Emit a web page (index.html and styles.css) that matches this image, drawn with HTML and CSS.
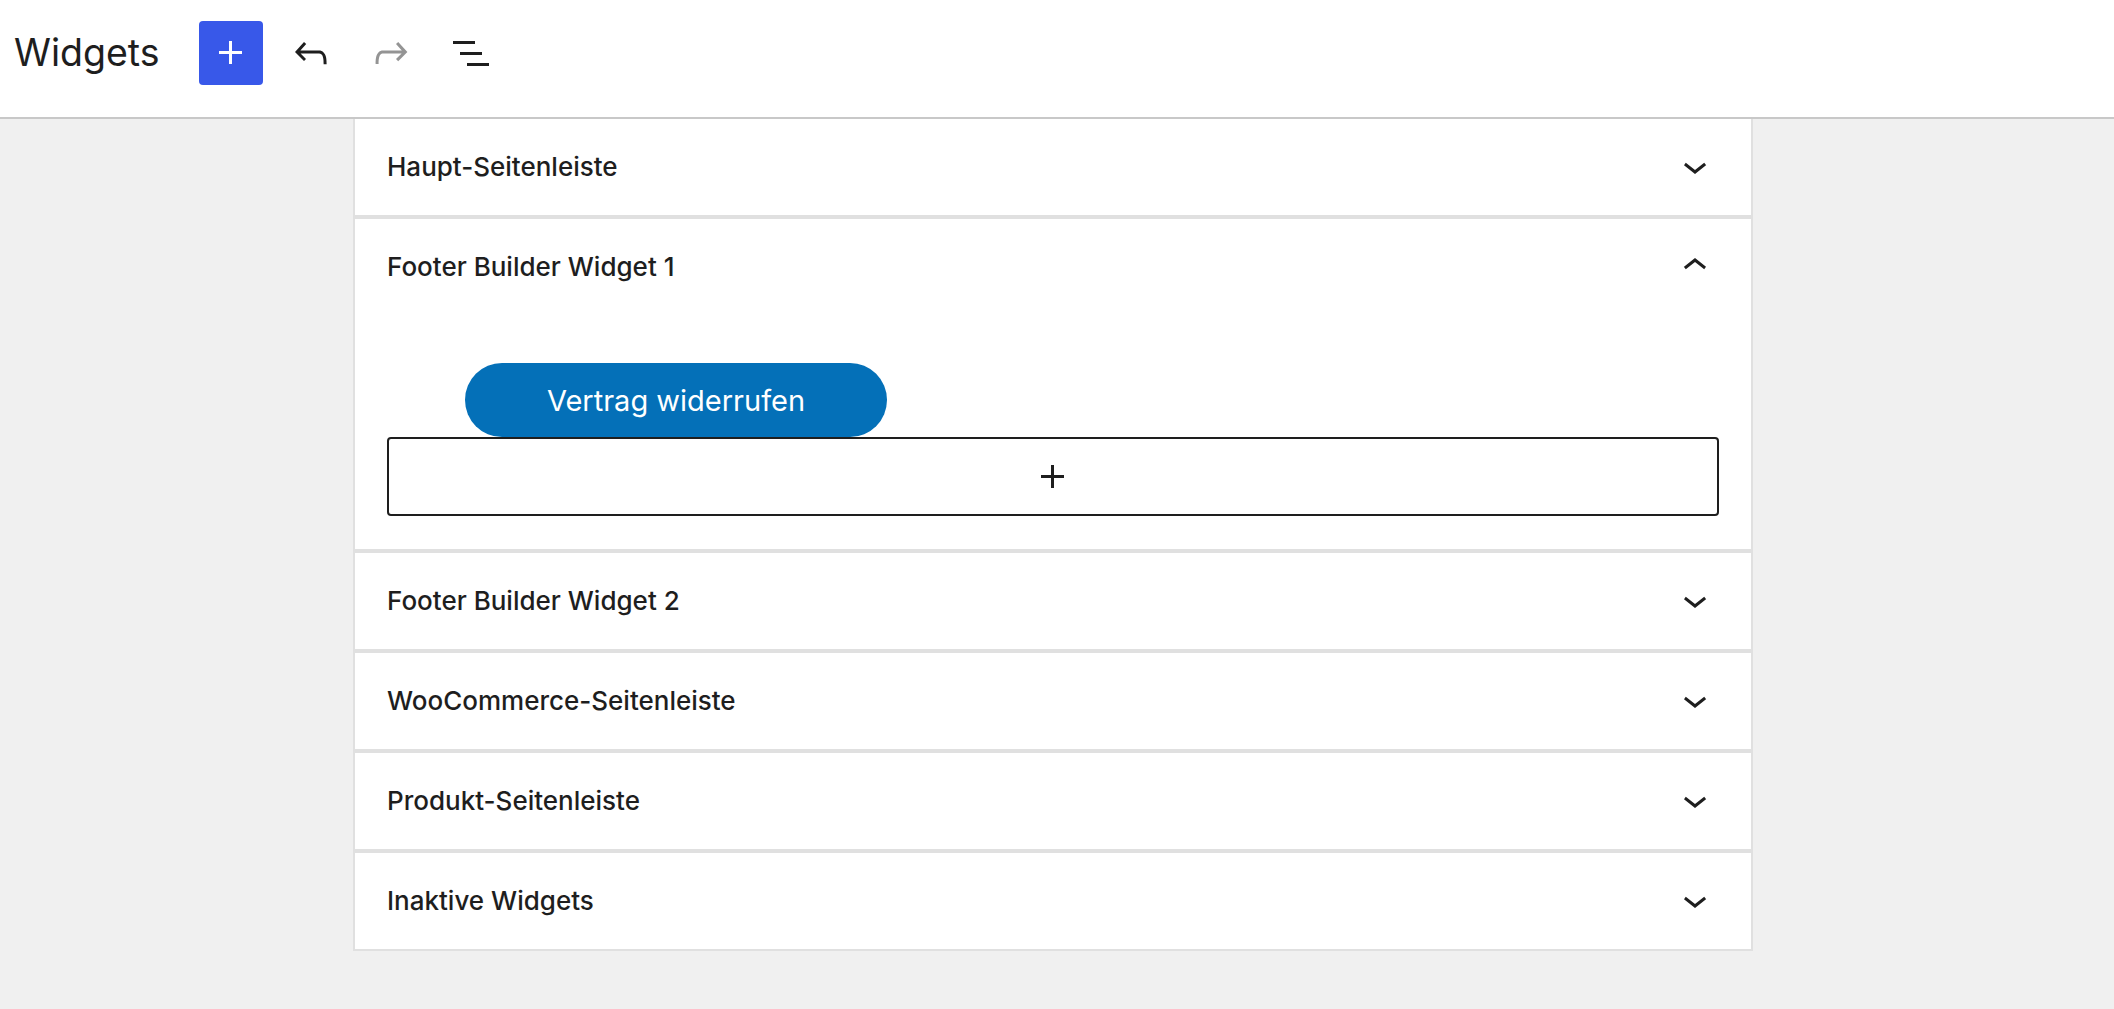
FILE: index.html
```html
<!DOCTYPE html>
<html lang="de">
  <head>
    <meta charset="UTF-8" />
    <meta name="viewport" content="width=device-width, initial-scale=1.0" />
    <title>Widgets</title>
    <link rel="stylesheet" href="styles.css">
  </head>
  <body>
    <!-- header -->
    <div class="header">
      <h1 class="title">Widgets</h1>
      <div class="tools">
        <button class="tool add">
          <svg viewBox="0 0 24 24" width="48" height="48"><path d="M11 12.5V17.5H12.5V12.5H17.5V11H12.5V6H11V11H6V12.5H11Z" /></svg>
        </button>
        <button class="tool">
          <svg viewBox="0 0 24 24" width="48" height="48"><path d="M18.3 11.7c-.6-.6-1.4-.9-2.3-.9H6.7l2.9-3.3-1.1-1-4.5 5L8.5 16l1-1-2.7-2.7H16c.5 0 .9.2 1.3.5 1 1 1 3.4 1 4.5v.3h1.5v-.2c0-1.5 0-4.3-1.5-5.7z" /></svg>
        </button>
        <button class="tool disabled">
          <svg viewBox="0 0 24 24" width="48" height="48"><path d="M15.6 6.5l-1.1 1 2.9 3.3H8c-.9 0-1.7.3-2.3.9-1.4 1.5-1.4 4.2-1.4 5.6v.2h1.5v-.3c0-1.1 0-3.5 1-4.5.3-.3.7-.5 1.3-.5h9.2L14.5 15l1.1 1.1 4.6-4.6-4.6-5z" /></svg>
        </button>
        <button class="tool">
          <svg viewBox="0 0 24 24" width="48" height="48"><path d="M3 6h11v1.5H3V6Zm3.5 5.5h11V13h-11v-1.5ZM21 17H10v1.5h11V17Z" /></svg>
        </button>
      </div>
    </div>

    <!-- areas -->
    <div class="areas">
      <div class="area">
        <div class="area-head">
          <span>Haupt-Seitenleiste</span>
          <svg class="chev" viewBox="0 0 24 24" width="48" height="48"><path d="M17.5 11.6L12 16l-5.5-4.4.9-1.2L12 14l4.6-3.6 1 1.2z" /></svg>
        </div>
      </div>
      <div class="area open">
        <div class="area-head">
          <span>Footer Builder Widget 1</span>
          <svg class="chev" viewBox="0 0 24 24" width="48" height="48"><path d="M6.5 12.4L12 8l5.5 4.4-.9 1.2L12 10l-4.6 3.6-1-1.2z" /></svg>
        </div>
        <div class="area-body">
          <div class="pill">Vertrag widerrufen</div>
          <div class="inserter">
            <svg viewBox="0 0 24 24" width="48" height="48"><path d="M11 12.5V17.5H12.5V12.5H17.5V11H12.5V6H11V11H6V12.5H11Z" /></svg>
          </div>
        </div>
      </div>
      <div class="area">
        <div class="area-head">
          <span>Footer Builder Widget 2</span>
          <svg class="chev" viewBox="0 0 24 24" width="48" height="48"><path d="M17.5 11.6L12 16l-5.5-4.4.9-1.2L12 14l4.6-3.6 1 1.2z" /></svg>
        </div>
      </div>
      <div class="area">
        <div class="area-head">
          <span>WooCommerce-Seitenleiste</span>
          <svg class="chev" viewBox="0 0 24 24" width="48" height="48"><path d="M17.5 11.6L12 16l-5.5-4.4.9-1.2L12 14l4.6-3.6 1 1.2z" /></svg>
        </div>
      </div>
      <div class="area">
        <div class="area-head">
          <span>Produkt-Seitenleiste</span>
          <svg class="chev" viewBox="0 0 24 24" width="48" height="48"><path d="M17.5 11.6L12 16l-5.5-4.4.9-1.2L12 14l4.6-3.6 1 1.2z" /></svg>
        </div>
      </div>
      <div class="area">
        <div class="area-head">
          <span>Inaktive Widgets</span>
          <svg class="chev" viewBox="0 0 24 24" width="48" height="48"><path d="M17.5 11.6L12 16l-5.5-4.4.9-1.2L12 14l4.6-3.6 1 1.2z" /></svg>
        </div>
      </div>
    </div>
  </body>
</html>
```

FILE: styles.css
```css
* {
  padding: 0;
  margin: 0;
  box-sizing: border-box;
}
body {
  font-family: Inter, "Noto Sans", sans-serif;
  background: #f0f0f0;
  color: #1e1e1e;
}
.header {
  display: flex;
  align-items: flex-start;
  height: 119px;
  padding: 21px 0 0 14px;
  background: #fff;
  border-bottom: 2px solid #c8c8c8;
}
.title {
  font-size: 37.5px;
  font-weight: 400;
  line-height: 64px;
  margin-right: 39px;
}
.tools {
  display: flex;
  gap: 16px;
}
.tool {
  width: 64px;
  height: 64px;
  display: flex;
  align-items: center;
  justify-content: center;
  border: none;
  background: none;
  border-radius: 4px;
  fill: #1e1e1e;
}
.tool svg {
  flex-shrink: 0;
}
.tool.add {
  background: #3858e9;
  fill: #fff;
}
.tool.disabled {
  fill: #949494;
}
.areas {
  width: 1400px;
  margin-left: 353px;
  background: #fff;
  border: 2px solid #e0e0e0;
  border-top: none;
}
.area + .area {
  border-top: 4px solid #e0e0e0;
}
.area-head {
  height: 96px;
  padding: 0 32px;
  display: flex;
  align-items: center;
  justify-content: space-between;
  font-size: 26px;
  font-weight: 500;
  line-height: 1;
}
.chev {
  fill: #1e1e1e;
  margin-top: -3px;
}
.area-body {
  padding: 48px 32px 33px;
}
.pill {
  width: 422px;
  height: 74px;
  margin-left: 78px;
  border-radius: 37px;
  background: #0470b8;
  color: #fff;
  font-size: 29px;
  display: flex;
  align-items: center;
  justify-content: center;
}
.inserter {
  height: 79px;
  border: 2px solid #1e1e1e;
  border-radius: 4px;
  display: flex;
  align-items: center;
  justify-content: center;
  fill: #1e1e1e;
}
```
